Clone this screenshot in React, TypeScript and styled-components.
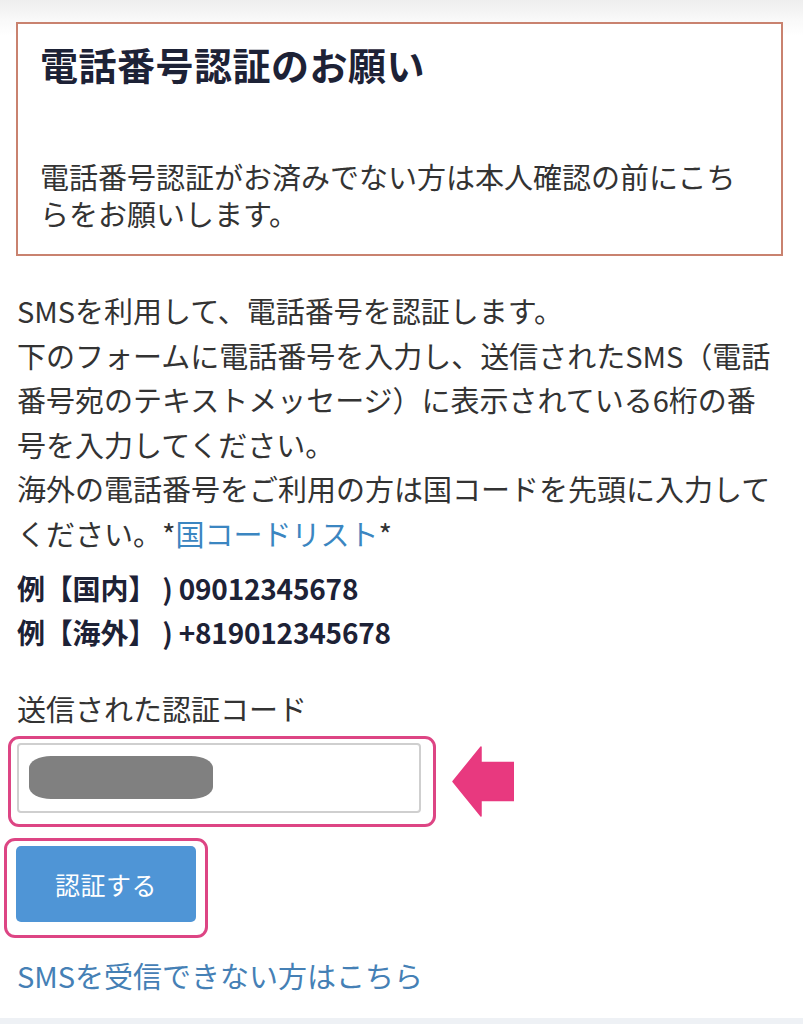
import React from "react";
import styled, { createGlobalStyle } from "styled-components";

const GlobalStyle = createGlobalStyle`
  html, body {
    margin: 0;
    padding: 0;
    background: #ffffff;
  }
  body {
    font-family: "Noto Sans CJK JP", "Noto Sans", sans-serif;
    color: #333333;
  }
`;

const Page = styled.div`
  width: 803px;
  min-height: 1024px;
  box-sizing: border-box;
  padding-top: 22px;
  background: linear-gradient(#eeeeee 0px, #f9f9f9 20px, #ffffff 36px);
  display: flex;
  flex-direction: column;
  overflow: hidden;
`;

const NoticeBox = styled.section`
  margin: 0 20px 0 16px;
  border: 2px solid #c9826f;
  background: #ffffff;
  padding: 20px 20px 22px 22px;
`;

const NoticeTitle = styled.h2`
  margin: 0;
  font-size: 38px;
  line-height: 40px;
  font-weight: 700;
  color: #1d2236;
  letter-spacing: 0.5px;
`;

const NoticeText = styled.p`
  margin: 74px 0 0;
  font-size: 29px;
  line-height: 37px;
  color: #333333;
`;

const Content = styled.div`
  padding: 0 26px 0 17px;
  margin-top: 32px;
`;

const Paragraph = styled.p`
  margin: 0;
  font-size: 29px;
  line-height: 44.6px;
  color: #333333;
`;

const InlineLink = styled.a`
  color: #3b86c1;
  text-decoration: none;
`;

const Examples = styled.div`
  margin-top: 10px;
`;

const ExampleLine = styled.p`
  margin: 0;
  font-size: 28px;
  line-height: 44px;
  font-weight: 700;
  color: #1d2236;
  letter-spacing: -0.2px;
`;

const FieldLabel = styled.label`
  display: block;
  margin: 32px 0 0 17px;
  font-size: 29px;
  line-height: 44px;
  color: #333333;
`;

const FieldRow = styled.div`
  display: flex;
  align-items: center;
  gap: 16px;
  margin: 6px 0 0 8px;
`;

const Highlight = styled.div<{ $pad: string }>`
  border: 3px solid #dd4584;
  border-radius: 11px;
  padding: ${(p) => p.$pad};
  display: inline-flex;
  align-self: flex-start;
  background: #ffffff;
`;

const CodeInput = styled.div`
  width: 404px;
  height: 70px;
  box-sizing: border-box;
  border: 2px solid #cfcfcf;
  border-radius: 4px;
  background: #ffffff;
  display: flex;
  align-items: center;
  padding-left: 10px;
`;

const Redaction = styled.span`
  display: block;
  width: 184px;
  height: 43px;
  background: #808080;
  border-radius: 22px / 12px;
`;

const ButtonWrap = styled.div`
  margin: 11px 0 0 4px;
  display: flex;
`;

const SubmitButton = styled.button`
  width: 180px;
  height: 76px;
  border: none;
  border-radius: 5px;
  background: #4f95d6;
  color: #ffffff;
  font-family: "Noto Sans CJK JP", sans-serif;
  font-size: 25px;
  letter-spacing: 0.5px;
  cursor: pointer;
`;

const HelpLink = styled.a`
  display: block;
  margin: 15px 0 0 17px;
  font-size: 29px;
  line-height: 44px;
  color: #4580b5;
  text-decoration: none;
`;

const BottomBand = styled.div`
  margin-top: auto;
  height: 6px;
  background: #eef1f5;
`;

const Arrow = () => (
  <svg width="62" height="71" viewBox="0 0 62 71" aria-hidden="true">
    <path
      d="M1 35.5 L29 1 L29 16.5 L62 16.5 L62 54.5 L29 54.5 L29 70 Z"
      fill="#e8397f"
      stroke="#e8397f"
      strokeWidth="1.5"
      strokeLinejoin="round"
    />
  </svg>
);

export default function App() {
  return (
    <>
      <GlobalStyle />
      <Page>
        <NoticeBox>
          <NoticeTitle>電話番号認証のお願い</NoticeTitle>
          <NoticeText>
            電話番号認証がお済みでない方は本人確認の前にこちらをお願いします。
          </NoticeText>
        </NoticeBox>

        <Content>
          <Paragraph>
            SMSを利用して、電話番号を認証します。
            <br />
            下のフォームに電話番号を入力し、送信されたSMS（電話番号宛のテキストメッセージ）に表示されている6桁の番号を入力してください。
            <br />
            海外の電話番号をご利用の方は国コードを先頭に入力してください。*
            <InlineLink href="#">国コードリスト</InlineLink>*
          </Paragraph>
          <Examples>
            <ExampleLine>例【国内】 ) 09012345678</ExampleLine>
            <ExampleLine>例【海外】 ) +819012345678</ExampleLine>
          </Examples>
        </Content>

        <FieldLabel>送信された認証コード</FieldLabel>
        <FieldRow>
          <Highlight $pad="4px 12px 11px 6px">
            <CodeInput>
              <Redaction />
            </CodeInput>
          </Highlight>
          <Arrow />
        </FieldRow>

        <ButtonWrap>
          <Highlight $pad="5px 9px 13px 9px">
            <SubmitButton type="button">認証する</SubmitButton>
          </Highlight>
        </ButtonWrap>

        <HelpLink href="#">SMSを受信できない方はこちら</HelpLink>
        <BottomBand />
      </Page>
    </>
  );
}
